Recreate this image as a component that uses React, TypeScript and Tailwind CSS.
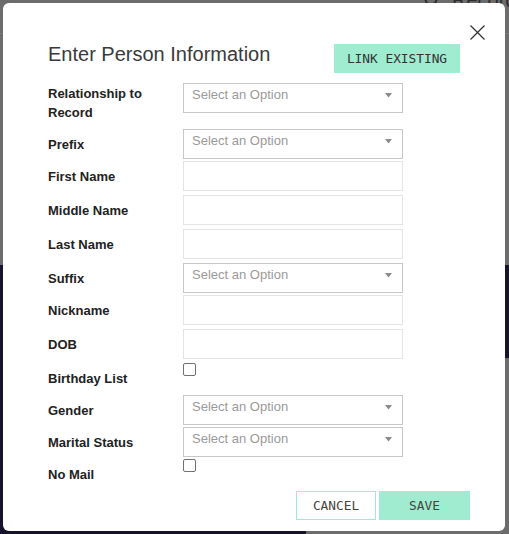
import React from "react";

const mono = "font-['DejaVu_Sans_Mono','Liberation_Mono',monospace]";

function Label({ children }: { children: React.ReactNode }) {
  return (
    <div className="w-[135px] shrink-0 text-[13px] font-bold leading-[19px] text-[#222]">
      {children}
    </div>
  );
}

function SelectBox() {
  return (
    <div className="flex h-[30px] w-[220px] items-start justify-between border border-[#c8c8c8] bg-white pl-[8px] pr-[10px] pt-[1px] text-[13px] leading-[20px] text-[#9a9a9a]">
      <span>Select an Option</span>
      <svg width="7" height="5" viewBox="0 0 7 5" className="mt-[8px]">
        <polygon points="0,0 7,0 3.5,4.5" fill="#8a8a8a" />
      </svg>
    </div>
  );
}

function TextBox() {
  return <input type="text" className="block h-[30px] w-[220px] border border-[#e4e4e4] bg-white px-2 text-[13px] outline-none" />;
}

function SelectRow({ label }: { label: string }) {
  return (
    <div className="mb-[2px] flex items-center">
      <Label>{label}</Label>
      <SelectBox />
    </div>
  );
}

function InputRow({ label }: { label: string }) {
  return (
    <div className="mb-[4px] flex items-center">
      <Label>{label}</Label>
      <TextBox />
    </div>
  );
}

function CheckRow({ label }: { label: string }) {
  return (
    <div className="flex h-[32px] items-start">
      <div className="pt-[6px]">
        <Label>{label}</Label>
      </div>
      <input
        type="checkbox"
        className="m-0 h-[13px] w-[13px] appearance-none rounded-[2px] border border-[#707070] bg-white"
      />
    </div>
  );
}

export default function App() {
  return (
    <div className="relative h-[534px] w-[509px] overflow-hidden bg-[#6c6c6c] font-['Liberation_Sans',Arial,sans-serif]">
      {/* backdrop page (dimmed) */}
      <div className="absolute left-0 top-[33px] h-px w-full bg-[#7a7a7a]" />
      <div className="absolute left-0 top-[265px] h-[93px] w-full bg-[#17132b]" />
      <div className="absolute left-0 top-[265px] h-[269px] w-[306px] bg-[#17132b]" />
      <div className="absolute left-[424px] top-[-15px] flex items-center gap-[12px] text-[20px] text-[#2c2c2c]">
        <svg width="16" height="16" viewBox="0 0 16 16">
          <circle cx="7" cy="7" r="5.5" stroke="#2c2c2c" strokeWidth="2" fill="none" />
          <line x1="11" y1="11" x2="15" y2="15" stroke="#2c2c2c" strokeWidth="2" />
        </svg>
        <span>Record</span>
      </div>

      {/* modal */}
      <div className="absolute left-[3px] top-[3px] z-10 h-[528px] w-[502px] rounded-[6px] bg-white">
        <button className="absolute left-[467px] top-[22px] h-[15px] w-[15px]" aria-label="Close">
          <svg width="15" height="15" viewBox="0 0 15 15">
            <line x1="0.5" y1="0.5" x2="14.5" y2="14.5" stroke="#333" strokeWidth="1.3" />
            <line x1="14.5" y1="0.5" x2="0.5" y2="14.5" stroke="#333" strokeWidth="1.3" />
          </svg>
        </button>

        <div className="pl-[45px] pt-[41px]">
          <div className="flex items-start pr-[45px]">
            <h2 className="mt-[-2px] text-[20px] font-normal leading-[24px] text-[#3a3a3a]">
              Enter Person Information
            </h2>
            <button
              className={`ml-auto flex h-[29px] w-[126px] items-center justify-center bg-[#a0ecd0] text-[12.8px] text-[#333] ${mono}`}
            >
              LINK EXISTING
            </button>
          </div>

          <div className="mt-[10px] mb-[7px] flex items-start">
            <div className="mt-[1px]">
              <Label>
                Relationship to
                <br />
                Record
              </Label>
            </div>
            <SelectBox />
          </div>

          <SelectRow label="Prefix" />
          <InputRow label="First Name" />
          <InputRow label="Middle Name" />
          <InputRow label="Last Name" />
          <SelectRow label="Suffix" />
          <InputRow label="Nickname" />
          <InputRow label="DOB" />
          <CheckRow label="Birthday List" />
          <SelectRow label="Gender" />
          <SelectRow label="Marital Status" />
          <CheckRow label="No Mail" />

          <div className="flex justify-end gap-[3px] pr-[35px]">
            <button
              className={`flex h-[29px] w-[80px] items-center justify-center border border-[#a0ecd0] bg-white text-[12.8px] text-[#444] ${mono}`}
            >
              CANCEL
            </button>
            <button
              className={`flex h-[29px] w-[91px] items-center justify-center bg-[#a0ecd0] text-[12.8px] text-[#444] ${mono}`}
            >
              SAVE
            </button>
          </div>
        </div>
      </div>
    </div>
  );
}
